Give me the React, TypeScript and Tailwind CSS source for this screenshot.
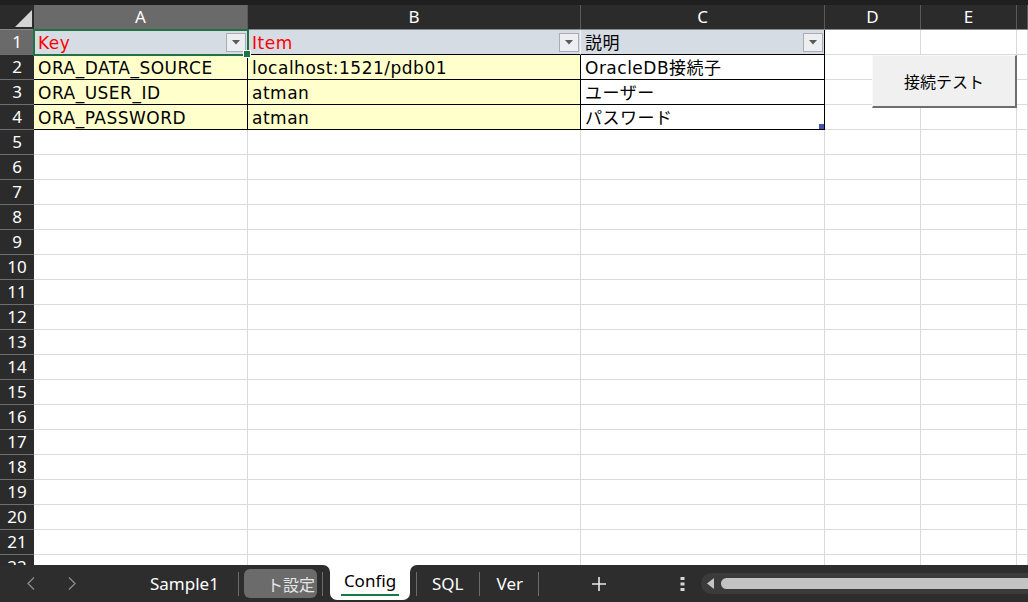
import React from "react";

const FONT = "[font-family:'DejaVu_Sans','Noto_Sans_CJK_JP',sans-serif]";

const COL_W = ["w-[214px]", "w-[333px]", "w-[244px]", "w-[96px]", "w-[96px]", "flex-1"];
const COL_LABELS = ["A", "B", "C", "D", "E", ""];

type Cell = { text?: string; cls: string; filter?: boolean };

const HEAD = "bg-[#d6dce4] border-r border-r-[#f2f4f7] border-b border-b-black";
const YEL = "bg-[#ffffcc] text-black border-r border-r-black border-b border-b-black";
const WHT = "bg-white text-black border-r border-r-black border-b border-b-black";
const EMPTY = "bg-white border-r border-b border-[#dadada]";

const TABLE: Cell[][] = [
  [
    { text: "Key", cls: HEAD + " text-[#ff0000]", filter: true },
    { text: "Item", cls: HEAD + " text-[#ff0000]", filter: true },
    { text: "説明", cls: "bg-[#d6dce4] text-black border-r border-r-black border-b border-b-black", filter: true },
  ],
  [
    { text: "ORA_DATA_SOURCE", cls: YEL },
    { text: "localhost:1521/pdb01", cls: YEL },
    { text: "OracleDB接続子", cls: WHT },
  ],
  [
    { text: "ORA_USER_ID", cls: YEL },
    { text: "atman", cls: YEL },
    { text: "ユーザー", cls: WHT },
  ],
  [
    { text: "ORA_PASSWORD", cls: YEL },
    { text: "atman", cls: YEL },
    { text: "パスワード", cls: WHT },
  ],
];

function FilterButton() {
  return (
    <div className="absolute right-[1px] top-[3px] w-[20px] h-[19px] border border-[#a9acb1] bg-[#eceef1] flex items-center justify-center">
      <svg width="8" height="5" viewBox="0 0 8 5">
        <path d="M0 0 H8 L4 4.5 Z" fill="#5a5a5a" />
      </svg>
    </div>
  );
}

function Row({ n }: { n: number }) {
  const cells = TABLE[n - 1];
  return (
    <div className="flex h-[25px] shrink-0">
      <div
        className={
          "w-[34px] shrink-0 flex items-center justify-center text-[17px] text-white border-b border-b-[#6f6f6f] [font-family:'Noto_Sans',sans-serif] " +
          (n === 1 ? "bg-[#6a6a6a]" : "bg-[#2b2b2b]")
        }
      >
        {n}
      </div>
      {COL_W.map((w, i) => {
        const c = cells && cells[i];
        return (
          <div
            key={i}
            className={
              w +
              " shrink-0 relative h-[25px] pl-[4px] pt-[2px] flex items-center text-[17px] tracking-[0.5px] leading-none whitespace-nowrap " +
              (c ? c.cls : EMPTY)
            }
          >
            {c?.text}
            {c?.filter && <FilterButton />}
          </div>
        );
      })}
    </div>
  );
}

function Sep() {
  return <div className="w-px h-[24px] bg-[#6c6c6c] shrink-0" />;
}

export default function App() {
  const rows = Array.from({ length: 22 }, (_, i) => i + 1);
  return (
    <div className={"relative w-[1028px] h-[602px] overflow-hidden bg-white flex flex-col " + FONT}>
      {/* column headers */}
      <div className="h-[5px] bg-[#1f1f1f] shrink-0" />
      <div className="flex h-[25px] shrink-0 bg-[#2b2b2b] border-b border-b-[#8a8a8a] [font-family:'Noto_Sans',sans-serif]">
        <div className="w-[34px] shrink-0 relative">
          <svg className="absolute left-[15px] top-[5px]" width="18" height="18" viewBox="0 0 18 18">
            <path d="M17 0 V17 H0 Z" fill="#d4d4d4" />
          </svg>
        </div>
        {COL_W.map((w, i) => (
          <div
            key={i}
            className={
              w +
              " shrink-0 flex items-center justify-center text-[17px] text-white border-r border-r-[#5a5a5a] " +
              (i === 0 ? "bg-[#6a6a6a]" : "")
            }
          >
            {COL_LABELS[i]}
          </div>
        ))}
      </div>

      {/* cells */}
      <div className="flex-1 overflow-hidden flex flex-col">
        {rows.map((n) => (
          <Row key={n} n={n} />
        ))}
      </div>

      {/* sheet tabs */}
      <div className="h-[37px] shrink-0 flex bg-white [font-family:'Noto_Sans','Noto_Sans_CJK_JP',sans-serif] text-[17px]">
        <div className="w-[330px] shrink-0 bg-[#2d2d2d] rounded-tr-[7px] flex items-center">
          <div className="w-[27px]" />
          <svg width="8" height="13" viewBox="0 0 8 13">
            <path d="M7 0.5 L1 6.5 L7 12.5" fill="none" stroke="#8c8c8c" strokeWidth="1.3" />
          </svg>
          <div className="w-[33px]" />
          <svg width="8" height="13" viewBox="0 0 8 13">
            <path d="M1 0.5 L7 6.5 L1 12.5" fill="none" stroke="#8c8c8c" strokeWidth="1.3" />
          </svg>
          <div className="w-[74px]" />
          <span className="text-white">Sample1</span>
          <div className="w-[19px]" />
          <Sep />
          <div className="w-[5px]" />
          <div className="w-[73px] h-[29px] rounded-[6px] bg-[#6b6b6b] flex items-center justify-end pr-[2px] text-[#e6e6e6]">
            <span className="[font-family:'Noto_Sans_CJK_JP',sans-serif] text-[16px] whitespace-nowrap">ト設定</span>
          </div>
          <div className="w-[5px]" />
          <Sep />
        </div>
        <div className="w-[80px] shrink-0 bg-[#2d2d2d]">
          <div className="h-[35px] bg-white rounded-b-[7px] flex flex-col items-center justify-center">
            <span className="text-black leading-none mt-[3px]">Config</span>
            <div className="w-[58px] h-[2px] bg-[#107c41] mt-[5px]" />
          </div>
        </div>
        <div className="flex-1 bg-[#2d2d2d] rounded-tl-[7px] flex items-center">
          <div className="w-[6px]" />
          <Sep />
          <div className="w-[15px]" />
          <span className="text-white">SQL</span>
          <div className="w-[15px]" />
          <Sep />
          <div className="w-[17px]" />
          <span className="text-white">Ver</span>
          <div className="w-[15px]" />
          <Sep />
          <div className="w-[52px]" />
          <svg width="16" height="16" viewBox="0 0 16 16">
            <path d="M8 1 V15 M1 8 H15" stroke="#e8e8e8" strokeWidth="1.6" />
          </svg>
          <div className="w-[73px]" />
          <svg width="5" height="14" viewBox="0 0 5 14">
            <rect x="0.5" y="0" width="4" height="3" fill="#d8d8d8" />
            <rect x="0.5" y="5.5" width="4" height="3" fill="#d8d8d8" />
            <rect x="0.5" y="11" width="4" height="3" fill="#d8d8d8" />
          </svg>
          <div className="w-[16px]" />
          <div className="flex-1 h-[21px] bg-[#3b3b3b] rounded-l-full flex items-center">
            <div className="w-[6px]" />
            <svg width="8" height="11" viewBox="0 0 8 11">
              <path d="M7 0 V11 L0 5.5 Z" fill="#c4c4c4" />
            </svg>
            <div className="w-[6px]" />
            <div className="flex-1 h-[11px] bg-[#c3c3c3] rounded-l-full" />
          </div>
        </div>
      </div>

      {/* selection on A1 */}
      <div className="absolute left-[33px] top-[29px] w-[216px] h-[27px] border-2 border-[#217346] pointer-events-none" />
      <div className="absolute left-[244px] top-[51px] w-[6px] h-[6px] bg-[#217346] outline outline-1 outline-white" />

      {/* table resize handle */}
      <div className="absolute left-[819px] top-[124px] w-[5px] h-[5px] bg-[#4355a8]" />

      {/* form button */}
      <div className="absolute left-[872px] top-[55px] w-[145px] h-[53px] bg-[#f0f0f0] border-t border-l border-t-[#fafafa] border-l-[#fafafa] border-r-2 border-b-2 border-r-[#6e6e6e] border-b-[#6e6e6e] flex items-center justify-center text-[16px] text-black [font-family:'Noto_Sans_CJK_JP',sans-serif]">
        接続テスト
      </div>
    </div>
  );
}
